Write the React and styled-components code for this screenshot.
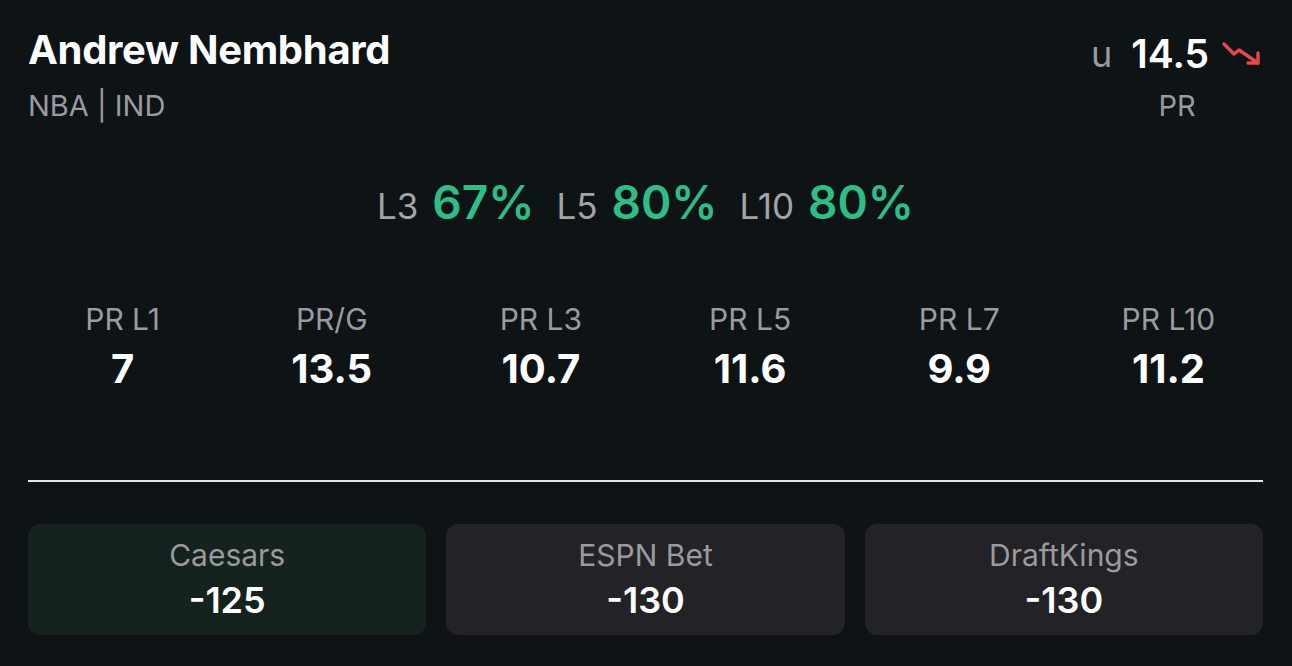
import styled, { createGlobalStyle } from "styled-components";

const Global = createGlobalStyle`
  html, body {
    margin: 0;
    padding: 0;
    background: #0e1316;
  }
  body {
    font-family: Inter, "Liberation Sans", sans-serif;
  }
`;

const Card = styled.div`
  width: 1292px;
  height: 666px;
  box-sizing: border-box;
  padding: 26px 29px 0 28px;
  background: #0e1316;
  display: flex;
  flex-direction: column;
`;

const Header = styled.div`
  display: flex;
  justify-content: space-between;
  align-items: flex-start;
`;

const Player = styled.div`
  display: flex;
  flex-direction: column;
`;

const Name = styled.div`
  color: #ffffff;
  font-size: 40px;
  font-weight: 700;
  line-height: 48px;
  letter-spacing: -0.3px;
`;

const Sub = styled.div`
  color: #9a9aa0;
  font-size: 29px;
  line-height: 34px;
  margin-top: 15px;
`;

const Line = styled.div`
  display: flex;
  flex-direction: column;
  align-items: center;
  margin-top: 3px;
`;

const LineTop = styled.div`
  display: flex;
  align-items: center;
  height: 50px;
  line-height: 50px;
`;

const OverUnder = styled.span`
  color: #9a9aa0;
  font-size: 36px;
  margin-right: 19px;
`;

const LineValue = styled.span`
  color: #ffffff;
  font-size: 39px;
  font-weight: 600;
  margin-right: 12px;
`;

const LineLabel = styled.div`
  color: #9a9aa0;
  font-size: 29px;
  line-height: 34px;
  margin-top: 10px;
`;

const Hits = styled.div`
  display: flex;
  justify-content: center;
  align-items: baseline;
  gap: 14px;
  height: 56px;
  line-height: 56px;
  margin-top: 51px;
`;

const HitLabel = styled.span`
  color: #a3a3a8;
  font-size: 35px;
  margin-left: ${(p) => (p.$first ? 0 : "8px")};
`;

const HitPct = styled.span`
  color: #2ebd85;
  font-size: 46px;
  font-weight: 600;
`;

const Stats = styled.div`
  display: grid;
  grid-template-columns: repeat(6, 1fr);
  margin: 71px -10px 0 -10px;
`;

const Stat = styled.div`
  display: flex;
  flex-direction: column;
  align-items: center;
`;

const StatLabel = styled.div`
  color: #9a9aa0;
  font-size: 30px;
  line-height: 36px;
`;

const StatValue = styled.div`
  color: #ffffff;
  font-size: 40px;
  font-weight: 700;
  line-height: 48px;
  margin-top: 8px;
`;

const Divider = styled.div`
  height: 2px;
  background: #e4e4e6;
  margin-top: 87px;
`;

const Books = styled.div`
  display: grid;
  grid-template-columns: repeat(3, 1fr);
  gap: 20px;
  margin-top: 42px;
`;

const Book = styled.div`
  height: 111px;
  box-sizing: border-box;
  padding-top: 13px;
  border-radius: 12px;
  background: ${(p) => (p.$best ? "#15231e" : "#232227")};
  display: flex;
  flex-direction: column;
  align-items: center;
`;

const BookName = styled.div`
  color: #9a9aa0;
  font-size: 30px;
  line-height: 36px;
`;

const BookOdds = styled.div`
  color: #ffffff;
  font-size: 36px;
  font-weight: 600;
  line-height: 44px;
  margin-top: 5px;
`;

const TrendDown = () => (
  <svg width="42" height="26" viewBox="0 0 42 26" fill="none" stroke="#e8484b" strokeWidth="3.4" strokeLinecap="round" strokeLinejoin="round">
    <polyline points="3,3 13,13 18,9 37,22" />
    <polyline points="27,22 37,22 37,12" />
  </svg>
);

const hits = [
  { label: "L3", pct: "67%" },
  { label: "L5", pct: "80%" },
  { label: "L10", pct: "80%" },
];

const stats = [
  { label: "PR L1", value: "7" },
  { label: "PR/G", value: "13.5" },
  { label: "PR L3", value: "10.7" },
  { label: "PR L5", value: "11.6" },
  { label: "PR L7", value: "9.9" },
  { label: "PR L10", value: "11.2" },
];

const books = [
  { name: "Caesars", odds: "-125", best: true },
  { name: "ESPN Bet", odds: "-130" },
  { name: "DraftKings", odds: "-130" },
];

export default function App() {
  return (
    <>
      <Global />
      <Card>
        <Header>
          <Player>
            <Name>Andrew Nembhard</Name>
            <Sub>NBA | IND</Sub>
          </Player>
          <Line>
            <LineTop>
              <OverUnder>u</OverUnder>
              <LineValue>14.5</LineValue>
              <TrendDown />
            </LineTop>
            <LineLabel>PR</LineLabel>
          </Line>
        </Header>

        <Hits>
          {hits.map((h, i) => (
            <span key={h.label} style={{ display: "contents" }}>
              <HitLabel $first={i === 0}>{h.label}</HitLabel>
              <HitPct>{h.pct}</HitPct>
            </span>
          ))}
        </Hits>

        <Stats>
          {stats.map((s) => (
            <Stat key={s.label}>
              <StatLabel>{s.label}</StatLabel>
              <StatValue>{s.value}</StatValue>
            </Stat>
          ))}
        </Stats>

        <Divider />

        <Books>
          {books.map((b) => (
            <Book key={b.name} $best={b.best}>
              <BookName>{b.name}</BookName>
              <BookOdds>{b.odds}</BookOdds>
            </Book>
          ))}
        </Books>
      </Card>
    </>
  );
}
